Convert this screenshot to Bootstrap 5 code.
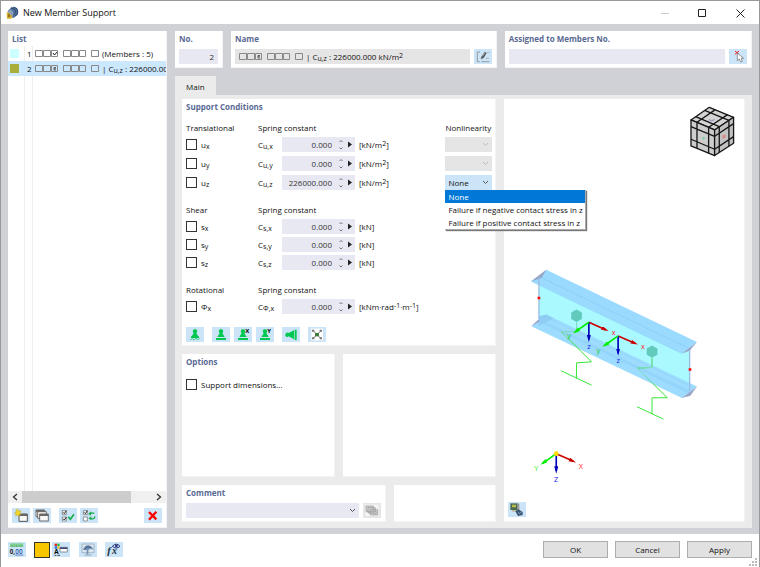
<!DOCTYPE html>
<html lang="en">
<head>
<meta charset="utf-8">
<meta name="viewport" content="width=device-width, initial-scale=1">
<title>New Member Support</title>
<link href="https://cdn.jsdelivr.net/npm/bootstrap@5.3.0/dist/css/bootstrap.min.css" rel="stylesheet">
<style>
body{font-family:"Open Sans","Noto Sans",sans-serif;font-size:8px;line-height:15px;color:#111;background:#fff}
.window{border:1px solid #999}
.titlebar{height:23px;padding-left:5px}
.titlebar h1{font-size:9px;line-height:22px;font-weight:400;margin:0}
.winctl{width:38px;height:23px;border:0;background:none;padding:0}
.workspace{background:#d0d0d7;padding:7px 7px 6px;gap:8px}
.side{flex:0 0 159px;min-width:0}
.pane{background:#fff;border-right:1px solid #f3f3f5;border-bottom:1px solid #f3f3f5;padding:0 4px}
.pane h2{font-size:8px;line-height:15px;font-weight:700;color:#5a6a94;margin:0}
.side .pane{padding:0;min-width:0}
.side h2{padding-left:4px}
.entry{height:15px;white-space:nowrap;overflow:hidden}
.entry.selected{background:#cce8ff}
.entries{background:linear-gradient(90deg,transparent 16px,#eee 16px 17px,transparent 17px 24px,#eee 24px 25px,transparent 25px)}
.swatch{width:9px;height:9px;margin:0 8px 0 2px;flex:none}
.entry-no{width:8px;flex:none}
.after-boxes{margin-left:2px}
sub,sup{font-size:7px}
sub{bottom:-1px}
sup{top:-2px}
.scroller{height:12px;background:#f0f0f0}
.thumb{flex:0 0 109px;background:#cdcdcd}
.arrow{width:14px;border:0;background:none;padding:0;line-height:0}
.tools{padding:5px 4px 4px;gap:3px}
.tools .set{margin-left:5px}
.tool{width:18px;height:15px;padding:0;border:0;border-radius:0;background:#cce4f7;line-height:0;flex:none;display:block}
.tool svg{width:18px;height:15px;display:block}
.tool:disabled{background:#e5e5e5}
.field{height:15px;min-width:0;background:#e8e8f3;border:0;border-radius:0;color:#333;line-height:15px;padding:0 4px;font-size:8px}
.field.locked{background:#e5e5e5;color:#111}
.under{margin-top:3px}
.headers{gap:8px;height:37px}
.headers .pane{min-width:0}
.col-a{flex:315 1 0}
.col-b{flex:240 1 0}
.no-pane{flex:0 0 48px}
.name-pane{flex:266 1 0}
.assign-pane{flex:247 1 0}
.tabs{margin-top:8px}
.tab{background:#ebebeb;border:0;padding:1px 11px 0;height:19px;color:#111}
.tabbody{background:#ebebeb;padding:4px 7px 6px;gap:8px}
.stack{gap:8px;min-width:0}
.conditions{height:247px;padding-right:3px}
.fieldset-title{height:15px;margin-bottom:2px}
.line{height:15px;margin-bottom:4px}
.group{margin-bottom:9px}
.group.first{margin:6px 0 8px}
.group.tight .line{margin-bottom:3px}
.c-check{flex:0 0 72px}
.c-sym{flex:0 0 24px}
.c-num{flex:0 0 73px;background:#e8e8f3;height:15px}
.c-unit{flex:1 1 0;padding-left:4px}
.c-non{flex:0 0 47px}
.c-num input{width:54px;padding:0 4px 0 0;text-align:right;background:none}
.c-num svg{width:19px;height:15px}
.tick{appearance:none;width:11px;height:11px;border:1px solid #333;background:#fff;margin:0 4px 0 0;flex:none}
.pick{appearance:none;width:100%;height:15px;border:0;border-radius:0;padding:0 3px;font-size:8px;line-height:15px;color:#111;opacity:1;
background:#cce4f7 url("data:image/svg+xml,%3Csvg xmlns='http://www.w3.org/2000/svg' viewBox='0 0 7 5'%3E%3Cpath d='M1 1l2.500 2.500L6 1' fill='none' stroke='%23555'/%3E%3C/svg%3E") no-repeat right 3px center/7px 5px}
.pick:disabled{background-color:#e5e5e5;opacity:1}
.pick.faint{background-image:url("data:image/svg+xml,%3Csvg xmlns='http://www.w3.org/2000/svg' viewBox='0 0 7 5'%3E%3Cpath d='M1 1l2.500 2.500L6 1' fill='none' stroke='%23bbb'/%3E%3C/svg%3E")}
.pick.plain{background-color:#e8e8f3}
.options-menu{position:absolute;top:100%;left:0;z-index:5;background:#fff;border:solid #aaa;border-width:0 1px 1px 0;box-shadow:1px 1px 1px #777;white-space:nowrap}
.options-menu li{line-height:13px;padding:0 2px 0 3px}
.options-menu li.on{background:#0078d7;color:#fff}
.opt-pane{height:123px;flex:1 1 0}
.note-pane{height:37px;flex:1 1 0}
.note-pane.wide{flex:0 0 65%}
.view svg.scene{width:100%;height:auto;display:block}
.view{padding:0}
.view .tool{position:absolute;left:4px;bottom:4px}
.footer{height:33px;padding:0 7px 2px}
.near{margin-right:5px}
.push{width:65px;height:17px;background:#e1e1e1;border:1px solid #adadad;padding:0;line-height:15px;color:#111}
.pushes{gap:7px}
.colour{width:16px;height:16px;background:#f7c600;border:1px solid #333;padding:0;margin-right:2px}
.grip{position:absolute;right:2px;bottom:1px;width:8px;height:8px}
.boxes{width:65px;height:9px;flex:none}
.tab,.push,.tool,.field{font-size:8px}
</style>
<script src="https://cdn.jsdelivr.net/npm/bootstrap@5.3.0/dist/js/bootstrap.bundle.min.js"></script>
</head>
<body>
<svg width="0" height="0" class="position-absolute" aria-hidden="true">
<defs>
<g id="sq" fill="none" stroke="#888" stroke-width="1"><path d="M.5 1.500h7v6h-7zM8.500 1.500h7v6h-7zM16.500 1.500h6v6h-6zM28.500 1.500h7v6h-7zM36.500 1.500h7v6h-7zM44.500 1.500h6v6h-6zM56.500 1.500h7v6h-7z"/></g>
<g id="stamp"><path d="M27 7a6 6 0 0 1 4 11l7 12H16l7-12a6 6 0 0 1 4-11z" fill="#00c850"/></g>
<g id="spin"><path d="M3.500 5L5 3.500 6.500 5M3.500 10.500L5 12l1.500-1.500" fill="none" stroke="#555" stroke-width=".8"/><path d="M12 4.500v6l4-3z" fill="#222"/></g>
<marker id="hr" orient="auto" markerWidth="24" markerHeight="14" refX="14" refY="6" markerUnits="userSpaceOnUse"><path d="M0 0L22 6L0 12z" fill="#c00"/></marker>
<marker id="hg" orient="auto" markerWidth="24" markerHeight="14" refX="14" refY="6" markerUnits="userSpaceOnUse"><path d="M0 0L22 6L0 12z" fill="#0e0"/></marker>
<marker id="hb" orient="auto" markerWidth="24" markerHeight="14" refX="14" refY="6" markerUnits="userSpaceOnUse"><path d="M0 0L22 6L0 12z" fill="#00b"/></marker>
<g id="axes" fill="none" stroke-width="5"><path d="M0 0L52 23" stroke="#c00" marker-end="url(#hr)"/><path d="M0 0L0 52" stroke="#00b" marker-end="url(#hb)"/><path d="M0 0L-41 29" stroke="#0e0" marker-end="url(#hg)"/></g>
</defs>
</svg>
<div class="window d-flex flex-column min-vh-100 position-relative">
<header class="titlebar d-flex align-items-center">
<svg width="13" height="13" viewBox="0 0 39 39" class="me-1" aria-hidden="true"><path d="M5 15L17 3l14 2 6 9-2 13-12 9-16-5z" fill="#59769e"/><path d="M15 6l11 3 3 11-9 9M22 3l11 5 2 13-8 9" fill="none" stroke="#26446d" stroke-width="3"/><path d="M6 14l8-3 7 6 1 10-7 6-10-4z" fill="#8b9fbb"/><path d="M2 19l8 2 3 5 6 3-3 9H3z" fill="#d5ad2b"/><path d="M6 25h6v8H6z" fill="#8d721d"/></svg>
<h1 class="flex-fill">New Member Support</h1>
<button class="winctl" aria-label="Minimize"><svg width="9" height="9"><path d="M1 4.500h8" stroke="#ccc"/></svg></button>
<button class="winctl" aria-label="Maximize"><svg width="9" height="9"><path d="M.5.5h7v7h-7z" fill="none" stroke="#222"/></svg></button>
<button class="winctl" aria-label="Close"><svg width="9" height="9"><path d="M.5.5l8 8M8.500.5l-8 8" stroke="#222"/></svg></button>
</header>

<main class="workspace d-flex flex-fill">
<aside class="side d-flex">
<section class="pane d-flex flex-column flex-fill overflow-hidden">
<h2>List</h2>
<div class="entries flex-fill">
<div class="entry d-flex align-items-center"><span class="swatch" style="background:#ccffff"></span><span class="entry-no">1</span><svg class="boxes" aria-hidden="true"><use href="#sq"/><path d="M18 4l1.500 2L22 3" fill="none" stroke="#222"/></svg><span class="after-boxes">(Members : 5)</span></div>
<div class="entry selected d-flex align-items-center"><span class="swatch" style="background:#a9ad3c"></span><span class="entry-no">2</span><svg class="boxes" aria-hidden="true"><use href="#sq"/><path d="M21 3.500h-2v2.500h2M19 4.800h2" fill="none" stroke="#444" stroke-width=".8"/></svg><span class="after-boxes">| C<sub>u,z</sub> : 226000.000 kN/m<sup>2</sup></span></div>
</div>
<div class="scroller d-flex">
<button class="arrow" aria-label="Scroll left"><svg width="6" height="8"><path d="M5 1L1.500 4 5 7" fill="none" stroke="#333" stroke-width="1.300"/></svg></button><div class="thumb"></div><span class="flex-fill"></span><button class="arrow" aria-label="Scroll right"><svg width="6" height="8"><path d="M1 1l3.500 3L1 7" fill="none" stroke="#333" stroke-width="1.300"/></svg></button>
</div>
<div class="tools d-flex">
<button class="tool" aria-label="New"><svg viewBox="0 0 54 45"><path d="M21 18h25v22H21z" fill="#f7f7f7" stroke="#555" stroke-width="3"/><path d="M21 18h25v6H21z" fill="#666"/><path d="M17 3l3 7 7-3-3 7 6 4-7 1-1 7-5-5-6 4 1-7-6-3 7-2-2-6z" fill="#f3d52c" stroke="#9b8a20"/></svg></button>
<button class="tool" aria-label="Copy"><svg viewBox="0 0 54 45"><g fill="#f7f7f7" stroke="#555" stroke-width="2.500"><path d="M9 6h26v20H9z"/><path d="M14 11h26v20H14z"/><path d="M20 18h26v21H20z"/></g><path d="M9 6h26v5H9zM20 18h26v6H20z" fill="#666"/></svg></button>
<button class="tool set" aria-label="Select all"><svg viewBox="0 0 54 45"><path d="M10 8h12v12H10zM10 27h12v12H10z" fill="#fff" stroke="#666" stroke-width="2"/><path d="M12 13l4 4 6-9M12 32l4 4 6-9" fill="none" stroke="#222" stroke-width="3"/><path d="M28 26l6 8 11-15" fill="none" stroke="#16ae4c" stroke-width="5"/></svg></button>
<button class="tool" aria-label="Invert selection"><svg viewBox="0 0 54 45"><path d="M10 8h12v12H10zM10 27h12v12H10z" fill="#fff" stroke="#666" stroke-width="2"/><path d="M12 13l4 4 6-9" fill="none" stroke="#222" stroke-width="3"/><path d="M30 18q4-5 13-2M31 31q9 4 13-2v-4" fill="none" stroke="#27ac58" stroke-width="4"/><path d="M33 10v13l-9-5zM34 25v12l-9-6z" fill="#27ac58"/></svg></button>
<button class="tool ms-auto" aria-label="Delete"><svg viewBox="0 0 54 45"><path d="M15 12l22 22M37 11L15 35" fill="none" stroke="#f00" stroke-width="7"/></svg></button>
</div>
</section>
</aside>

<div class="flex-fill d-flex flex-column">
<div class="headers d-flex">
<section class="pane no-pane"><h2><label for="no">No.</label></h2><input id="no" class="field w-100 text-end under d-block" value="2"></section>
<section class="pane name-pane"><h2>Name</h2><div class="d-flex under"><output class="field locked flex-fill d-flex align-items-center me-1 ps-0" aria-label="Name"><svg class="boxes ms-1" aria-hidden="true"><use href="#sq"/><path d="M21 3.500h-2v2.500h2M19 4.800h2" fill="none" stroke="#444" stroke-width=".8"/></svg><span class="after-boxes">| C<sub>u,z</sub> : 226000.000 kN/m<sup>2</sup></span></output><button class="tool" aria-label="Edit name"><svg viewBox="0 0 54 45"><path d="M18 9H10v29h7M22 38h24" fill="none" stroke="#777" stroke-width="2"/><path d="M20 31l3-9 9-14 6 4-9 15z" fill="#555"/><path d="M25 22l8-12" stroke="#ddd" stroke-width="2"/><path d="M39 10h7M36 28h8" stroke="#999" stroke-width="2"/></svg></button></div></section>
<section class="pane assign-pane"><h2><label for="assigned">Assigned to Members No.</label></h2><div class="d-flex under"><input id="assigned" class="field flex-fill me-1"><button class="tool" aria-label="Pick members"><svg viewBox="0 0 54 45"><path d="M18 6l12 10M30 6L18 16" stroke="#e22" stroke-width="3"/><path d="M25 12v23l6-5 4 9 5-2-4-9h8z" fill="#fff" stroke="#666" stroke-width="2"/></svg></button></div></section>
</div>
<div class="tabs d-flex" role="tablist"><button class="tab" role="tab" aria-selected="true">Main</button></div>
<div class="tabbody d-flex flex-fill">
<div class="stack col-a d-flex flex-column">
<section class="pane conditions d-flex flex-column">
<h2>Support Conditions</h2>
<div class="group first">
<div class="d-flex fieldset-title"><span class="c-check">Translational</span><span class="flex-fill">Spring constant</span><span class="c-non">Nonlinearity</span></div>
<div class="line d-flex align-items-center"><label class="c-check d-flex align-items-center"><input type="checkbox" class="tick"><span>u<sub>x</sub></span></label><label class="c-sym" for="cux">C<sub>u,x</sub></label><div class="c-num d-flex"><input id="cux" class="field" value="0.000"><svg aria-hidden="true"><use href="#spin"/></svg></div><span class="c-unit">[kN/m<sup>2</sup>]</span><div class="c-non"><select class="pick faint d-block" disabled aria-label="Nonlinearity x"></select></div></div>
<div class="line d-flex align-items-center"><label class="c-check d-flex align-items-center"><input type="checkbox" class="tick"><span>u<sub>y</sub></span></label><label class="c-sym" for="cuy">C<sub>u,y</sub></label><div class="c-num d-flex"><input id="cuy" class="field" value="0.000"><svg aria-hidden="true"><use href="#spin"/></svg></div><span class="c-unit">[kN/m<sup>2</sup>]</span><div class="c-non"><select class="pick faint d-block" disabled aria-label="Nonlinearity y"></select></div></div>
<div class="line d-flex align-items-center"><label class="c-check d-flex align-items-center"><input type="checkbox" class="tick"><span>u<sub>z</sub></span></label><label class="c-sym" for="cuz">C<sub>u,z</sub></label><div class="c-num d-flex"><input id="cuz" class="field" value="226000.000"><svg aria-hidden="true"><use href="#spin"/></svg></div><span class="c-unit">[kN/m<sup>2</sup>]</span><div class="c-non position-relative"><select class="pick d-block" aria-label="Nonlinearity z"><option>None</option></select>
<ul class="options-menu list-unstyled m-0" role="listbox"><li class="on" role="option" aria-selected="true">None</li><li role="option">Failure if negative contact stress in z</li><li role="option">Failure if positive contact stress in z</li></ul></div></div>
</div>
<div class="group tight">
<div class="d-flex fieldset-title"><span class="c-check">Shear</span><span>Spring constant</span></div>
<div class="line d-flex align-items-center"><label class="c-check d-flex align-items-center"><input type="checkbox" class="tick"><span>s<sub>x</sub></span></label><label class="c-sym" for="csx">C<sub>s,x</sub></label><div class="c-num d-flex"><input id="csx" class="field" value="0.000"><svg aria-hidden="true"><use href="#spin"/></svg></div><span class="c-unit">[kN]</span></div>
<div class="line d-flex align-items-center"><label class="c-check d-flex align-items-center"><input type="checkbox" class="tick"><span>s<sub>y</sub></span></label><label class="c-sym" for="csy">C<sub>s,y</sub></label><div class="c-num d-flex"><input id="csy" class="field" value="0.000"><svg aria-hidden="true"><use href="#spin"/></svg></div><span class="c-unit">[kN]</span></div>
<div class="line d-flex align-items-center"><label class="c-check d-flex align-items-center"><input type="checkbox" class="tick"><span>s<sub>z</sub></span></label><label class="c-sym" for="csz">C<sub>s,z</sub></label><div class="c-num d-flex"><input id="csz" class="field" value="0.000"><svg aria-hidden="true"><use href="#spin"/></svg></div><span class="c-unit">[kN]</span></div>
</div>
<div class="group">
<div class="d-flex fieldset-title"><span class="c-check">Rotational</span><span>Spring constant</span></div>
<div class="line d-flex align-items-center"><label class="c-check d-flex align-items-center"><input type="checkbox" class="tick"><span>Φ<sub>x</sub></span></label><label class="c-sym" for="cpx">C<sub>Φ,x</sub></label><div class="c-num d-flex"><input id="cpx" class="field" value="0.000"><svg aria-hidden="true"><use href="#spin"/></svg></div><span class="c-unit">[kNm·rad<sup>-1</sup>·m<sup>-1</sup>]</span></div>
</div>
<div class="d-flex">
<button class="tool me-2" aria-label="Fixed"><svg viewBox="0 0 54 45"><use href="#stamp"/><path d="M15 28h24v5H15z" fill="#00c850"/><path d="M13 39l6-6 5 6 6-6 5 6 6-6" fill="none" stroke="#00c850" stroke-width="3" stroke-dasharray="4 2"/></svg></button>
<button class="tool me-1" aria-label="Hinged"><svg viewBox="0 0 54 45"><use href="#stamp"/><path d="M12 33h30v6H12z" fill="#00c850"/></svg></button>
<button class="tool me-1" aria-label="Hinged, free in X"><svg viewBox="0 0 54 45"><use href="#stamp"/><path d="M12 33h30v6H12z" fill="#00c850"/><text x="34" y="18" font-size="18" font-weight="700">X</text></svg></button>
<button class="tool me-2" aria-label="Hinged, free in Y"><svg viewBox="0 0 54 45"><use href="#stamp"/><path d="M12 33h30v6H12z" fill="#00c850"/><text x="34" y="18" font-size="18" font-weight="700">Y</text></svg></button>
<button class="tool me-2" aria-label="Lateral"><svg viewBox="0 0 54 45"><path d="M10 22a6 6 0 0 1 10-4l16-8v27l-16-9a6 6 0 0 1-10-6zM38 8h6v31h-6z" fill="#00c850"/></svg></button>
<button class="tool" aria-label="Free"><svg viewBox="0 0 54 45"><path d="M10 5h35v35H10z" fill="#fff"/><path d="M14 10l26 26M40 10L14 36" stroke="#777" stroke-width="3"/><path d="M21 18h12v10H21z" fill="#3d7c3d"/><path d="M12 8h7v6h-7zM35 8h7v6h-7zM12 31h7v6h-7zM35 31h7v6h-7z" fill="#777"/></svg></button>
</div>
</section>
<div class="d-flex gap-2">
<section class="pane opt-pane"><h2>Options</h2><label class="d-flex align-items-center mt-2"><input type="checkbox" class="tick">Support dimensions...</label></section>
<section class="pane opt-pane"></section>
</div>
<div class="d-flex gap-2">
<section class="pane note-pane wide"><h2><label for="comment">Comment</label></h2><div class="d-flex under"><select id="comment" class="pick plain me-1"></select><button class="tool" disabled aria-label="Edit comment"><svg viewBox="0 0 54 45"><path d="M7 5h40v34H7z" fill="#f4f4f4"/><g fill="#ccc" stroke="#999" stroke-width="2"><path d="M9 9h22v17H9zM15 14h22v16H15zM22 20h22v16H22z"/><circle cx="36" cy="28" r="4"/></g></svg></button></div></section>
<section class="pane note-pane"></section>
</div>
</div>
<section class="pane view col-b position-relative">
<svg class="scene" viewBox="1515 297 720 1266" role="img" aria-label="Member preview">
<g transform="translate(1500 60)" stroke="#161616" stroke-width="4" stroke-linejoin="round"><path d="M632 262L705 292L648 330L577 300z" fill="#d4d4d4"/><path d="M577 300L648 330V407L577 378z" fill="#cdcdcd"/><path d="M648 330L705 292V370L648 407z" fill="#c2c2c2"/><path d="M618 271L691 301M591 290L662 320M650 269L595 307M687 284L630 322M595 307V385M630 322V400M577 320L648 349M577 358L648 388M662 320V398M691 301V379M648 349L705 311M648 388L705 350" fill="none"/><path d="M631 299l8 3 9-3" stroke="#88b" stroke-width="3" fill="none"/><path d="M610 352h10l-5 9z" fill="#7c9" stroke="none"/><path d="M672 347l9-4v10l-9 4z" fill="#d88" stroke="none"/></g>
<g transform="translate(1515 765)">
<path d="M105 65L558 282V415L105 197z" fill="#a9f9ff"/>
<path d="M82 215L127 180L580 396L535 431z" fill="#9ddcff"/>
<path d="M105 197L558 414" stroke="#8accf5" stroke-width="9" opacity=".45"/><path d="M127 187L562 395" stroke="#7fc9ee" stroke-width="2" stroke-dasharray="4 3"/>
<path d="M105 185L127 180L150 192L105 214z" fill="#8fcdf5"/>
<path d="M82 80L127 45L580 262L535 297z" fill="#9bdaff"/><path d="M110 68L555 281" stroke="#84c9f1" stroke-width="3" stroke-dasharray="5 3"/><path d="M82 80L535 297" stroke="#8fd3f4" stroke-width="2"/>
<path d="M82 80L127 45L113 70zM82 215L104 194L107 201zM535 297L580 262L558 289zM535 431L580 396L560 424z" fill="#99a5c5"/><path d="M105 68V194M558 287V410" stroke="#9cbbe6" stroke-width="4"/>
<path d="M202 174l16-9 16 9v19l-16 9-16-9zM429 282l16-9 16 9v19l-16 9-16-9z" fill="#62c9bd"/>
<path d="M218 202V231H172L263 322L218 325V372M172 349L263 392M445 310V339L400 341L491 430H445V478M400 457L479 494" fill="none" stroke="#35e935" stroke-width="3"/>
<path d="M218 202V231H172L200 259M445 310V339L400 341L450 390" fill="none" stroke="#83d8cd" stroke-width="3"/>
<path d="M101 126h8v8h-8zM555 341h8v8h-8z" fill="#f00"/>
<use href="#axes" x="255" y="203"/><use href="#axes" x="343" y="244"/>
<g font-size="22"><g fill="#f22"><text x="324" y="242">x</text><text x="412" y="284">x</text></g><g fill="#1c1"><text x="190" y="251">y</text><text x="278" y="294">y</text></g><g fill="#22e"><text x="250" y="284">z</text><text x="338" y="326">z</text></g></g>
</g>
<g transform="translate(1500 1320)"><use href="#axes" x="172" y="43"/><circle cx="172" cy="43" r="7" fill="#fd0"/><g font-size="22"><text x="240" y="88" fill="#f22">X</text><text x="106" y="95" fill="#1e1">Y</text><text x="165" y="129" fill="#22e">Z</text></g></g>
</svg>
<button class="tool" aria-label="View settings"><svg viewBox="0 0 54 45"><path d="M7 4h22v20H7z" fill="#486b52"/><path d="M12 8h12v8H12z" fill="#b5bc4d"/><path d="M28 5h6v22h-6z" fill="#999"/><path d="M12 24h20v5H12z" fill="#c4bda4"/><path d="M22 28l9-6 13 8v9l-14 3z" fill="#385777"/><path d="M30 31l5 4 6-6" stroke="#bcd" stroke-width="2" fill="none"/></svg></button>
</section>
</div>
</div>
</main>

<footer class="footer d-flex align-items-center">
<button class="tool me-2" aria-label="Units"><svg viewBox="0 0 54 45"><path d="M6 4h40v11H6z" fill="#7fcf94"/><path d="M12 9v6M19 11v4M26 9v6M33 11v4M40 9v6" stroke="#4a9d62" stroke-width="2"/><text x="5" y="35" font-size="19" font-weight="700" fill="#222">0,</text><text x="22" y="35" font-size="19" font-weight="600" fill="#2653a5">00</text><path d="M22 39h24" stroke="#2653a5" stroke-width="2"/></svg></button>
<button class="colour" aria-label="Colour"></button>
<button class="tool near" aria-label="Display"><svg viewBox="0 0 54 45"><path d="M8 5h7v7H8z" fill="#e22"/><path d="M16 5h7v7h-7z" fill="#2b4"/><path d="M8 13h7v7H8z" fill="#26d"/><path d="M16 13h7v7h-7z" fill="#eb1"/><text x="7" y="36" font-size="19" font-weight="700">A</text><path d="M24 16h22v14H24z" fill="#fff" stroke="#567" stroke-width="2"/><path d="M24 16h22v5H24z" fill="#447"/><path d="M8 40h5M16 40h8" stroke="#444" stroke-width="3"/></svg></button>
<button class="tool me-2 ms-1" aria-label="Visibility"><svg viewBox="0 0 54 45"><path d="M9 6h36v26H9z" fill="#dce7ef" stroke="#8fa1b3" stroke-width="2"/><path d="M12 24Q16 9 28 10q11 1 15 13l-9-3-6 4v13h-5V24z" fill="#7190b5"/><path d="M17 22q7-12 18-5" fill="none" stroke="#35537b" stroke-width="3"/><path d="M17 39h20" stroke="#8fa1b3" stroke-width="3"/></svg></button>
<button class="tool" aria-label="Formula"><svg viewBox="0 0 54 45"><text x="7" y="35" font-size="32" font-style="italic" font-weight="600" font-family="Liberation Serif,serif" fill="#234">f</text><text x="21" y="37" font-size="30" font-style="italic" font-weight="700" font-family="Liberation Serif,serif" fill="#234">x</text><path d="M22 13q12-13 23 0-11 10-23 0z" fill="#d3dcf4" stroke="#25357a" stroke-width="3"/><circle cx="34" cy="12" r="4" fill="#25357a"/></svg></button>
<span class="flex-fill"></span>
<div class="d-flex pushes"><button class="push">OK</button><button class="push">Cancel</button><button class="push">Apply</button></div>
</footer>
<svg class="grip" viewBox="0 0 8 8" aria-hidden="true"><path d="M6 0h2v2H6zM3 3h2v2H3zM6 3h2v2H6zM0 6h2v2H0zM3 6h2v2H3zM6 6h2v2H6z" fill="#bbb"/></svg>
</div>
</body>
</html>
